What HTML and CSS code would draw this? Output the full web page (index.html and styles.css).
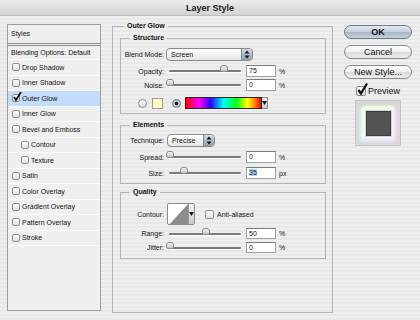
FILE: index.html
```html
<!DOCTYPE html>
<html lang="en">
  <head>
    <meta charset="utf-8" />
    <title>Layer Style</title>
    <link rel="stylesheet" href="styles.css">
  </head>
  <body>
    <div class="window">
      <div class="titlebar">Layer Style</div>

      <div class="dialog">
        <!-- effect list -->
        <div class="styles-list">
          <div class="list-head">Styles</div>
          <div class="list-item plain">Blending Options: Default</div>
          <div class="list-item"><span class="check"></span>Drop Shadow</div>
          <div class="list-item"><span class="check"></span>Inner Shadow</div>
          <div class="list-item selected">
            <span class="check on">
              <svg viewBox="0 0 10 10" width="10" height="10"><path d="M2 5 L4 8 L9 0" fill="none" stroke="#111" stroke-width="1.8"/></svg>
            </span>Outer Glow
          </div>
          <div class="list-item"><span class="check"></span>Inner Glow</div>
          <div class="list-item"><span class="check"></span>Bevel and Emboss</div>
          <div class="list-item sub"><span class="check"></span>Contour</div>
          <div class="list-item sub"><span class="check"></span>Texture</div>
          <div class="list-item"><span class="check"></span>Satin</div>
          <div class="list-item"><span class="check"></span>Color Overlay</div>
          <div class="list-item"><span class="check"></span>Gradient Overlay</div>
          <div class="list-item"><span class="check"></span>Pattern Overlay</div>
          <div class="list-item"><span class="check"></span>Stroke</div>
        </div>

        <fieldset class="group outer">
          <legend>Outer Glow</legend>

          <fieldset class="group inner structure">
            <legend>Structure</legend>
            <div class="row h14">
              <span class="lbl">Blend Mode:</span>
              <div class="popup blend">
                <span class="popup-text">Screen</span>
                <span class="stepper">
                  <svg viewBox="0 0 6 9" width="6" height="9"><path d="M0.5 3.5 L3 0.5 L5.5 3.5 Z M0.5 5.5 L3 8.5 L5.5 5.5 Z" fill="#111"/></svg>
                </span>
              </div>
            </div>
            <div class="row h12 mt4">
              <span class="lbl">Opacity:</span>
              <div class="slider"><span class="thumb" style="left: 75%"></span></div>
              <div class="field">75</div><span class="unit">%</span>
            </div>
            <div class="row h12 mt2">
              <span class="lbl">Noise:</span>
              <div class="slider"><span class="thumb" style="left: 0%"></span></div>
              <div class="field">0</div><span class="unit">%</span>
            </div>
            <div class="row h12 mt6 color-row">
              <span class="radio"></span>
              <span class="swatch"></span>
              <span class="radio on"></span>
              <div class="gradient-pick">
                <span class="gradient"></span>
                <span class="pick-arrow">
                  <svg viewBox="0 0 5 4" width="5" height="4"><path d="M0 0 H5 L2.5 4 Z" fill="#111"/></svg>
                </span>
              </div>
            </div>
          </fieldset>

          <fieldset class="group inner elements">
            <legend>Elements</legend>
            <div class="row h13">
              <span class="lbl">Technique:</span>
              <div class="popup technique">
                <span class="popup-text">Precise</span>
                <span class="stepper">
                  <svg viewBox="0 0 6 9" width="6" height="9"><path d="M0.5 3.5 L3 0.5 L5.5 3.5 Z M0.5 5.5 L3 8.5 L5.5 5.5 Z" fill="#111"/></svg>
                </span>
              </div>
            </div>
            <div class="row h12 mt4">
              <span class="lbl">Spread:</span>
              <div class="slider"><span class="thumb" style="left: 0%"></span></div>
              <div class="field">0</div><span class="unit">%</span>
            </div>
            <div class="row h12 mt4">
              <span class="lbl">Size:</span>
              <div class="slider"><span class="thumb" style="left: 19%"></span></div>
              <div class="field"><span class="sel">35</span></div><span class="unit">px</span>
            </div>
          </fieldset>

          <fieldset class="group inner quality">
            <legend>Quality</legend>
            <div class="row h22">
              <span class="lbl">Contour:</span>
              <div class="contour">
                <svg class="curve" viewBox="0 0 20 22" width="20" height="22" preserveAspectRatio="none"><path d="M0 22 L20 0 V22 Z" fill="#8c8c8c"/></svg>
                <span class="contour-arrow">
                  <svg viewBox="0 0 5 4" width="5" height="4"><path d="M0 0 H5 L2.5 4 Z" fill="#111"/></svg>
                </span>
              </div>
              <span class="check aa"></span>
              <span class="aa-text">Anti-aliased</span>
            </div>
            <div class="row h11 mt3">
              <span class="lbl">Range:</span>
              <div class="slider"><span class="thumb" style="left: 50%"></span></div>
              <div class="field">50</div><span class="unit">%</span>
            </div>
            <div class="row h11 mt3">
              <span class="lbl">Jitter:</span>
              <div class="slider"><span class="thumb" style="left: 0%"></span></div>
              <div class="field">0</div><span class="unit">%</span>
            </div>
          </fieldset>
        </fieldset>

        <div class="actions">
          <button class="btn default">OK</button>
          <button class="btn">Cancel</button>
          <button class="btn">New Style...</button>
          <div class="preview-toggle">
            <span class="big-check">
              <svg viewBox="0 0 12 13" width="12" height="13"><path d="M2.5 7 L5 10.5 L11 0.5" fill="none" stroke="#111" stroke-width="2.2"/></svg>
            </span>
            <span>Preview</span>
          </div>
          <div class="preview-box">
            <div class="preview-layer"></div>
          </div>
        </div>
      </div>
    </div>
  </body>
</html>
```

FILE: styles.css
```css
body {
  margin: 0;
  background: #ececec;
  font-family: "Liberation Sans", Arial, sans-serif;
  color: #111;
}

.window {
  width: 420px;
  height: 320px;
  overflow: hidden;
  background: repeating-linear-gradient(to bottom, #efefef 0, #efefef 2px, #e8e8e8 2px, #e8e8e8 4px);
}

.titlebar {
  height: 16px;
  line-height: 16px;
  text-align: center;
  font-size: 9px;
  font-weight: bold;
  color: #1a1a1a;
  background: linear-gradient(to bottom, #ececec, #d2d2d2);
  border-bottom: 1px solid #bdbdbd;
  box-sizing: border-box;
}

.dialog {
  display: flex;
  flex-direction: row;
  align-items: flex-start;
  padding-left: 7px;
}

/* left list */

.styles-list {
  width: 94px;
  height: 287px;
  margin-top: 8px;
  box-sizing: border-box;
  border: 1px solid #9c9c9c;
  background: #efefef;
  font-size: 7px;
}

.list-head {
  height: 18px;
  line-height: 18px;
  padding-left: 3px;
  border-bottom: 3px double #8c8c8c;
}

.list-item {
  display: flex;
  align-items: center;
  height: 15.5px;
  box-sizing: border-box;
  padding-left: 4px;
  border-bottom: 1px solid #fbfbfb;
}

.list-item.plain {
  height: 14px;
  padding-left: 3px;
}

.list-item.sub {
  padding-left: 13px;
}

.list-item.selected {
  background: #c4dcfb;
}

.check {
  display: inline-flex;
  align-items: center;
  justify-content: center;
  width: 8px;
  height: 8px;
  margin-right: 2px;
  box-sizing: border-box;
  border: 1px solid #8e8e8e;
  border-radius: 2px;
  background: linear-gradient(to bottom, #ffffff, #dedede);
  flex: none;
}

.check.on svg {
  margin-top: -3px;
  margin-left: 1px;
  flex: none;
}

/* main group boxes */

.group {
  margin: 0;
  padding: 0;
  min-width: 0;
  border: 1px solid #b4b4b4;
}

.group legend {
  font-size: 7px;
  font-weight: bold;
  line-height: 10px;
  padding: 0 3px;
}

.outer {
  width: 221px;
  height: 292px;
  box-sizing: border-box;
  margin-top: 5px;
  margin-left: 11px;
}

.outer > legend {
  margin-left: 11px;
}

.inner {
  width: 206px;
  box-sizing: border-box;
  margin-left: 7px;
}

.inner > legend {
  margin-left: 9px;
}

.structure {
  margin-top: 2px;
  padding: 4px 0 4px 0;
}

.elements {
  margin-top: 6px;
  padding: 4px 0 4px 0;
}

.quality {
  margin-top: 3px;
  padding: 6px 0 5px 0;
}

.row {
  display: flex;
  align-items: center;
  font-size: 7px;
}

.h11 { height: 11px; }
.h12 { height: 12px; }
.h13 { height: 13px; }
.h14 { height: 14px; }
.h22 { height: 22px; }
.mt2 { margin-top: 2px; }
.mt3 { margin-top: 3px; }
.mt4 { margin-top: 4px; }
.mt6 { margin-top: 6px; }

.lbl {
  width: 43px;
  text-align: right;
  flex: none;
}

.popup {
  display: flex;
  align-items: stretch;
  height: 13px;
  box-sizing: border-box;
  border: 1px solid #8a8a8a;
  border-radius: 4px;
  background: linear-gradient(to bottom, #ffffff, #e4e4e4);
  overflow: hidden;
}

.popup.blend {
  width: 87px;
  margin-left: 2px;
}

.popup.technique {
  width: 48px;
  margin-left: 3px;
}

.popup-text {
  flex: 1;
  padding-left: 4px;
  line-height: 11px;
}

.stepper {
  display: flex;
  align-items: center;
  justify-content: center;
  width: 10px;
  border-left: 1px solid #7d8898;
  background: linear-gradient(to bottom, #d2d9e3, #8e9cb1);
}

.slider {
  position: relative;
  width: 72px;
  height: 2px;
  margin-left: 5px;
  border-radius: 1px;
  background: #7a7a7a;
  box-shadow: 0 1px 0 #ffffff;
  flex: none;
}

.thumb {
  position: absolute;
  top: -5px;
  width: 8px;
  height: 7px;
  margin-left: -3px;
  box-sizing: border-box;
  border: 1px solid #8a8a8a;
  border-radius: 3px 3px 2px 2px;
  background: linear-gradient(to bottom, #f6f6f6, #c4c4c4);
}

.field {
  width: 30px;
  height: 12px;
  margin-left: 5px;
  box-sizing: border-box;
  border: 1px solid #a0a0a0;
  border-top-color: #7c7c7c;
  background: #ffffff;
  padding-left: 2px;
  line-height: 10px;
  flex: none;
}

.h11 .field {
  height: 11px;
  line-height: 9px;
}

.field .sel {
  background: #b5d3f8;
}

.unit {
  margin-left: 3px;
}

/* color choice */

.color-row {
  padding-left: 17px;
}

.radio {
  width: 9px;
  height: 9px;
  box-sizing: border-box;
  border: 1px solid #8a8a8a;
  border-radius: 50%;
  background: linear-gradient(to bottom, #ffffff, #dcdcdc);
  flex: none;
}

.radio.on {
  margin-left: 9px;
  background: radial-gradient(circle, #1c1c1c 0, #1c1c1c 1.6px, #c9d2de 2.2px, #9aa6b8 100%);
  border-color: #6f7a8a;
}

.swatch {
  width: 11px;
  height: 11px;
  margin-left: 5px;
  box-sizing: border-box;
  border: 1px solid #9a9a9a;
  background: #ffffc4;
  flex: none;
}

.gradient-pick {
  display: flex;
  height: 12px;
  margin-left: 4px;
}

.gradient {
  width: 77px;
  box-sizing: border-box;
  border: 1px solid #222;
  background: linear-gradient(to right, #ff0000 0%, #ff00ff 18%, #2a00ff 33%, #00ffff 50%, #00ff20 67%, #ffff00 82%, #ff8000 92%, #ff0000 100%);
}

.pick-arrow,
.contour-arrow {
  display: flex;
  align-items: center;
  justify-content: center;
  width: 6px;
  box-sizing: border-box;
  border: 1px solid #8a8a8a;
  border-left: none;
  background: linear-gradient(to bottom, #f4f4f4, #c8c8c8);
}

/* contour picker */

.contour {
  display: flex;
  width: 28px;
  height: 22px;
  margin-left: 3px;
  box-sizing: border-box;
  border: 1px solid #8a8a8a;
  border-radius: 2px;
  background: #ffffff;
  overflow: hidden;
}

.contour .curve {
  flex: none;
}

.contour-arrow {
  width: 6px;
  border: none;
  border-left: 1px solid #9a9a9a;
}

.check.aa {
  width: 9px;
  height: 9px;
  margin-left: 10px;
  margin-right: 3px;
}

/* buttons on the right */

.actions {
  display: flex;
  flex-direction: column;
  align-items: center;
  width: 68px;
  margin-top: 9px;
  margin-left: 11px;
}

.btn {
  width: 68px;
  height: 14px;
  margin: 0 0 6px 0;
  padding: 0;
  box-sizing: border-box;
  border: 1px solid #8a8a8a;
  border-radius: 7px;
  background: linear-gradient(to bottom, #ffffff 0%, #f0f0f0 50%, #dcdcdc 51%, #ececec 100%);
  font-family: "Liberation Sans", Arial, sans-serif;
  font-size: 9px;
  line-height: 12px;
  color: #111;
}

.btn.default {
  border-color: #6b7789;
  background: linear-gradient(to bottom, #e3e9f1 0%, #c3cedc 50%, #a7b5c8 51%, #c4cfdc 100%);
  font-weight: bold;
}

.preview-toggle {
  display: flex;
  align-items: center;
  height: 12px;
  margin-top: 0;
  font-size: 9px;
}

.big-check {
  position: relative;
  width: 10px;
  height: 10px;
  margin-right: 2px;
  box-sizing: border-box;
  border: 1px solid #8a8a8a;
  border-radius: 2px;
  background: linear-gradient(to bottom, #ffffff, #dcdcdc);
}

.big-check svg {
  position: absolute;
  left: -1px;
  top: -4px;
}

.preview-box {
  display: flex;
  align-items: center;
  justify-content: center;
  width: 46px;
  height: 46px;
  margin-top: 3px;
  box-sizing: border-box;
  border: 1px solid #c4c4c4;
  background: #d8d8d8;
}

.preview-layer {
  width: 23px;
  height: 23px;
  background: #545454;
  border: 1px solid #3e3e3e;
  box-shadow:
    0 0 0 1px #d8d0e0,
    -1px -1px 2px 3px #eaffe8,
    1px 1px 2px 3px #f6e4fb,
    0 -2px 2px 3px #fbfbd8,
    -2px 1px 3px 4px #e0f4f8,
    2px 2px 3px 4px #eed9f2;
}
```
